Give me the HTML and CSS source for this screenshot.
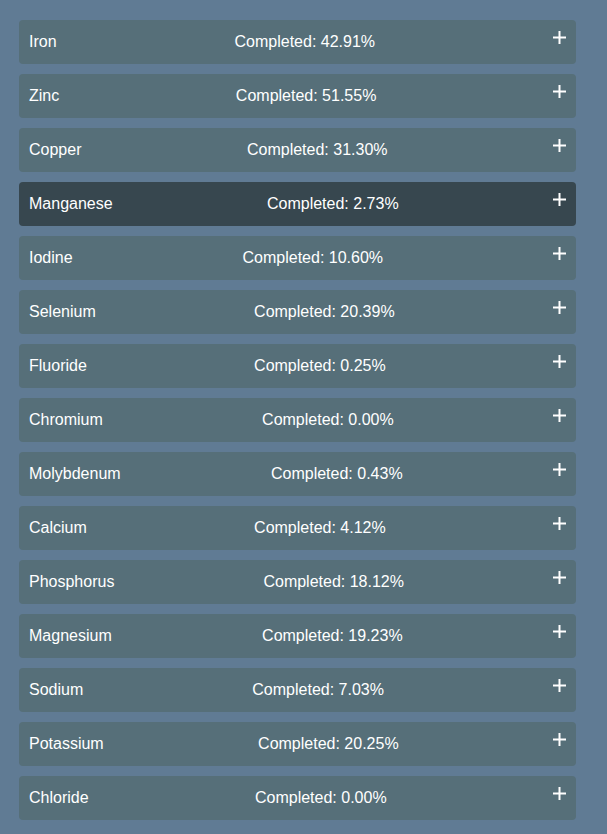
FILE: index.html
```html
<!DOCTYPE html>
<html>
<head>
<meta charset="utf-8">
<link rel="stylesheet" href="styles.css">
</head>
<body>
<ul class="list">
  <li class="item"><span class="name">Iron</span><span class="status">Completed: 42.91%</span><svg class="plus" viewBox="0 0 13 13"><path d="M0 6.5H13M6.5 0V13"/></svg></li>
  <li class="item"><span class="name">Zinc</span><span class="status">Completed: 51.55%</span><svg class="plus" viewBox="0 0 13 13"><path d="M0 6.5H13M6.5 0V13"/></svg></li>
  <li class="item"><span class="name">Copper</span><span class="status">Completed: 31.30%</span><svg class="plus" viewBox="0 0 13 13"><path d="M0 6.5H13M6.5 0V13"/></svg></li>
  <li class="item active"><span class="name">Manganese</span><span class="status">Completed: 2.73%</span><svg class="plus" viewBox="0 0 13 13"><path d="M0 6.5H13M6.5 0V13"/></svg></li>
  <li class="item"><span class="name">Iodine</span><span class="status">Completed: 10.60%</span><svg class="plus" viewBox="0 0 13 13"><path d="M0 6.5H13M6.5 0V13"/></svg></li>
  <li class="item"><span class="name">Selenium</span><span class="status">Completed: 20.39%</span><svg class="plus" viewBox="0 0 13 13"><path d="M0 6.5H13M6.5 0V13"/></svg></li>
  <li class="item"><span class="name">Fluoride</span><span class="status">Completed: 0.25%</span><svg class="plus" viewBox="0 0 13 13"><path d="M0 6.5H13M6.5 0V13"/></svg></li>
  <li class="item"><span class="name">Chromium</span><span class="status">Completed: 0.00%</span><svg class="plus" viewBox="0 0 13 13"><path d="M0 6.5H13M6.5 0V13"/></svg></li>
  <li class="item"><span class="name">Molybdenum</span><span class="status">Completed: 0.43%</span><svg class="plus" viewBox="0 0 13 13"><path d="M0 6.5H13M6.5 0V13"/></svg></li>
  <li class="item"><span class="name">Calcium</span><span class="status">Completed: 4.12%</span><svg class="plus" viewBox="0 0 13 13"><path d="M0 6.5H13M6.5 0V13"/></svg></li>
  <li class="item"><span class="name">Phosphorus</span><span class="status">Completed: 18.12%</span><svg class="plus" viewBox="0 0 13 13"><path d="M0 6.5H13M6.5 0V13"/></svg></li>
  <li class="item"><span class="name">Magnesium</span><span class="status">Completed: 19.23%</span><svg class="plus" viewBox="0 0 13 13"><path d="M0 6.5H13M6.5 0V13"/></svg></li>
  <li class="item"><span class="name">Sodium</span><span class="status">Completed: 7.03%</span><svg class="plus" viewBox="0 0 13 13"><path d="M0 6.5H13M6.5 0V13"/></svg></li>
  <li class="item"><span class="name">Potassium</span><span class="status">Completed: 20.25%</span><svg class="plus" viewBox="0 0 13 13"><path d="M0 6.5H13M6.5 0V13"/></svg></li>
  <li class="item"><span class="name">Chloride</span><span class="status">Completed: 0.00%</span><svg class="plus" viewBox="0 0 13 13"><path d="M0 6.5H13M6.5 0V13"/></svg></li>
</ul>
</body>
</html>
```
FILE: styles.css
```css
html, body {
  margin: 0;
  padding: 0;
  background: #607b94;
}
body {
  font-family: "Liberation Sans", Arial, sans-serif;
  font-size: 16px;
  color: #ffffff;
}
.list {
  list-style: none;
  margin: 0;
  padding: 20px 31px 14px 19px;
  display: flex;
  flex-direction: column;
  gap: 10px;
}
.item {
  height: 44px;
  box-sizing: border-box;
  padding: 0 10px;
  display: flex;
  align-items: center;
  justify-content: space-between;
  background: #566f79;
  border-radius: 4px;
}
.item.active {
  background: #37474f;
}
.name, .status {
  line-height: 20px;
}
.plus {
  width: 13px;
  height: 13px;
  align-self: flex-start;
  margin-top: 11px;
  stroke: #ffffff;
  stroke-width: 2;
  fill: none;
}
```
